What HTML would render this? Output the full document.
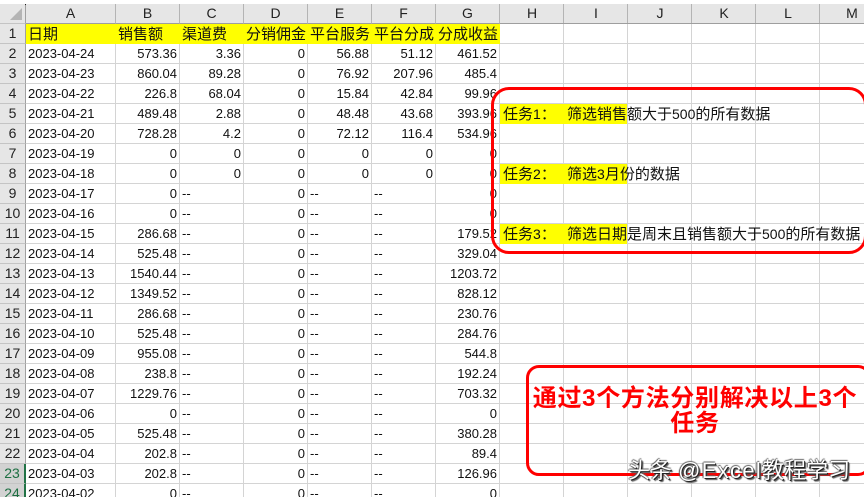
<!DOCTYPE html>
<html lang="zh"><head><meta charset="utf-8"><title>Excel</title>
<style>
html,body{margin:0;padding:0;background:#fff}
#p{position:relative;width:864px;height:497px;overflow:hidden;background:#fff;font-family:"Liberation Sans","Noto Sans CJK SC",sans-serif;color:#111}
table{position:absolute;left:0;top:4px;border-collapse:separate;border-spacing:0;table-layout:fixed;width:500px;font-size:13px}
td,th{box-sizing:border-box;height:20px;padding:0 2px;line-height:19px;border-right:1px solid #d4d4d4;border-bottom:1px solid #d4d4d4;white-space:nowrap;overflow:hidden;text-align:right;font-weight:normal}
td:nth-child(2){text-align:left}
td.l{text-align:left}
tr>th:first-child{background:#e6e6e6;text-align:center;padding:0;border-right:1px solid #a0a0a0;border-bottom:1px solid #c4c4c4;font-size:14px;color:#222}
thead th{background:#e6e6e6;text-align:center;border-right:1px solid #b4b4b4;border-bottom:1px solid #9e9e9e;font-size:14px;color:#222}
tr.y td{background:#ff0;border-right:0;border-bottom:0;font-size:15px;text-align:left;padding:0 0 0 2px;overflow:visible}
tr.s>th:first-child{background:#d2d2d2;color:#1d6f42;border-right:2px solid #217346}
#tri{position:absolute;left:10px;top:8px;width:0;height:0;border-left:12px solid transparent;border-bottom:12px solid #b4b4b4}
#dot{position:absolute;left:25px;top:4px;width:1px;height:1px;background:#222}
#hx{position:absolute;left:500px;top:4px;width:364px;height:20px;background:#e6e6e6 linear-gradient(to left,#b4b4b4 1px,transparent 1px) 0 0/64px 20px}
#hb{position:absolute;left:500px;top:23px;width:364px;height:1px;background:#9e9e9e}
#hx span{position:absolute;top:0;width:64px;text-align:center;font-size:14px;line-height:19px;color:#222}
#g{position:absolute;left:500px;top:24px;width:364px;height:473px;background-image:linear-gradient(to left,#d4d4d4 1px,transparent 1px),linear-gradient(to top,#d4d4d4 1px,transparent 1px);background-size:64px 20px}
.yb{position:absolute;left:500px;width:127px;height:20px;background:#ff0}
.t{position:absolute;font-size:15px;line-height:20px;white-space:nowrap;color:#111}
.t i{font-style:normal;font-size:14px}
.box{position:absolute;box-sizing:border-box;border:3px solid #f00;background:transparent}
#big{position:absolute;left:529px;top:386px;width:332px;text-align:center;color:#f00;font-weight:bold;font-size:24px;line-height:25px;white-space:nowrap;letter-spacing:.7px}
#wm{position:absolute;left:628px;top:458px;font-size:22px;line-height:26px;color:#fff;white-space:nowrap;text-shadow:1px 1px 0 #222,2px 2px 1px #555,-1px 0 1px #555,0 -1px 1px #666}
#wm span{letter-spacing:1.3px}
</style></head><body><div id="p">
<div id="g"></div>
<div id="hx"><span style="left:0">H</span><span style="left:64px">I</span><span style="left:128px">J</span><span style="left:192px">K</span><span style="left:256px">L</span><span style="left:320px">M</span></div>
<div id="hb"></div>
<table>
<colgroup><col style="width:26px"><col style="width:90px"><col style="width:64px"><col style="width:64px"><col style="width:64px"><col style="width:64px"><col style="width:64px"><col style="width:64px"></colgroup>
<thead><tr><th></th><th>A</th><th>B</th><th>C</th><th>D</th><th>E</th><th>F</th><th>G</th></tr></thead>
<tbody>
<tr class="y"><th>1</th><td>日期</td><td>销售额</td><td>渠道费</td><td>分销佣金</td><td>平台服务</td><td>平台分成</td><td>分成收益</td></tr>
<tr><th>2</th><td>2023-04-24</td><td>573.36</td><td>3.36</td><td>0</td><td>56.88</td><td>51.12</td><td>461.52</td></tr>
<tr><th>3</th><td>2023-04-23</td><td>860.04</td><td>89.28</td><td>0</td><td>76.92</td><td>207.96</td><td>485.4</td></tr>
<tr><th>4</th><td>2023-04-22</td><td>226.8</td><td>68.04</td><td>0</td><td>15.84</td><td>42.84</td><td>99.96</td></tr>
<tr><th>5</th><td>2023-04-21</td><td>489.48</td><td>2.88</td><td>0</td><td>48.48</td><td>43.68</td><td>393.96</td></tr>
<tr><th>6</th><td>2023-04-20</td><td>728.28</td><td>4.2</td><td>0</td><td>72.12</td><td>116.4</td><td>534.96</td></tr>
<tr><th>7</th><td>2023-04-19</td><td>0</td><td>0</td><td>0</td><td>0</td><td>0</td><td>0</td></tr>
<tr><th>8</th><td>2023-04-18</td><td>0</td><td>0</td><td>0</td><td>0</td><td>0</td><td>0</td></tr>
<tr><th>9</th><td>2023-04-17</td><td>0</td><td class="l">--</td><td>0</td><td class="l">--</td><td class="l">--</td><td>0</td></tr>
<tr><th>10</th><td>2023-04-16</td><td>0</td><td class="l">--</td><td>0</td><td class="l">--</td><td class="l">--</td><td>0</td></tr>
<tr><th>11</th><td>2023-04-15</td><td>286.68</td><td class="l">--</td><td>0</td><td class="l">--</td><td class="l">--</td><td>179.52</td></tr>
<tr><th>12</th><td>2023-04-14</td><td>525.48</td><td class="l">--</td><td>0</td><td class="l">--</td><td class="l">--</td><td>329.04</td></tr>
<tr><th>13</th><td>2023-04-13</td><td>1540.44</td><td class="l">--</td><td>0</td><td class="l">--</td><td class="l">--</td><td>1203.72</td></tr>
<tr><th>14</th><td>2023-04-12</td><td>1349.52</td><td class="l">--</td><td>0</td><td class="l">--</td><td class="l">--</td><td>828.12</td></tr>
<tr><th>15</th><td>2023-04-11</td><td>286.68</td><td class="l">--</td><td>0</td><td class="l">--</td><td class="l">--</td><td>230.76</td></tr>
<tr><th>16</th><td>2023-04-10</td><td>525.48</td><td class="l">--</td><td>0</td><td class="l">--</td><td class="l">--</td><td>284.76</td></tr>
<tr><th>17</th><td>2023-04-09</td><td>955.08</td><td class="l">--</td><td>0</td><td class="l">--</td><td class="l">--</td><td>544.8</td></tr>
<tr><th>18</th><td>2023-04-08</td><td>238.8</td><td class="l">--</td><td>0</td><td class="l">--</td><td class="l">--</td><td>192.24</td></tr>
<tr><th>19</th><td>2023-04-07</td><td>1229.76</td><td class="l">--</td><td>0</td><td class="l">--</td><td class="l">--</td><td>703.32</td></tr>
<tr><th>20</th><td>2023-04-06</td><td>0</td><td class="l">--</td><td>0</td><td class="l">--</td><td class="l">--</td><td>0</td></tr>
<tr><th>21</th><td>2023-04-05</td><td>525.48</td><td class="l">--</td><td>0</td><td class="l">--</td><td class="l">--</td><td>380.28</td></tr>
<tr><th>22</th><td>2023-04-04</td><td>202.8</td><td class="l">--</td><td>0</td><td class="l">--</td><td class="l">--</td><td>89.4</td></tr>
<tr class="s"><th>23</th><td>2023-04-03</td><td>202.8</td><td class="l">--</td><td>0</td><td class="l">--</td><td class="l">--</td><td>126.96</td></tr>
<tr class="s"><th>24</th><td>2023-04-02</td><td>0</td><td class="l">--</td><td>0</td><td class="l">--</td><td class="l">--</td><td>0</td></tr>
</tbody></table>
<div id="tri"></div><div id="dot"></div>
<div class="yb" style="top:104px"></div>
<div class="yb" style="top:164px"></div>
<div class="yb" style="top:224px"></div>
<div class="t" style="left:503px;top:104px">任务<i>1</i>：</div>
<div class="t" style="left:567px;top:104px">筛选销售额大于<i>500</i>的所有数据</div>
<div class="t" style="left:503px;top:164px">任务<i>2</i>：</div>
<div class="t" style="left:567px;top:164px">筛选<i>3</i>月份的数据</div>
<div class="t" style="left:503px;top:224px">任务<i>3</i>：</div>
<div class="t" style="left:567px;top:224px">筛选日期是周末且销售额大于<i>500</i>的所有数据</div>
<div class="box" style="left:491px;top:87px;width:376px;height:167px;border-radius:18px"></div>
<div class="box" style="left:526px;top:365px;width:345px;height:111px;border-radius:13px"></div>
<div id="big">通过3个方法分别解决以上3个<br>任务</div>
<div id="wm">头条 <span>@Excel</span>教程学习</div>
</div></body></html>
